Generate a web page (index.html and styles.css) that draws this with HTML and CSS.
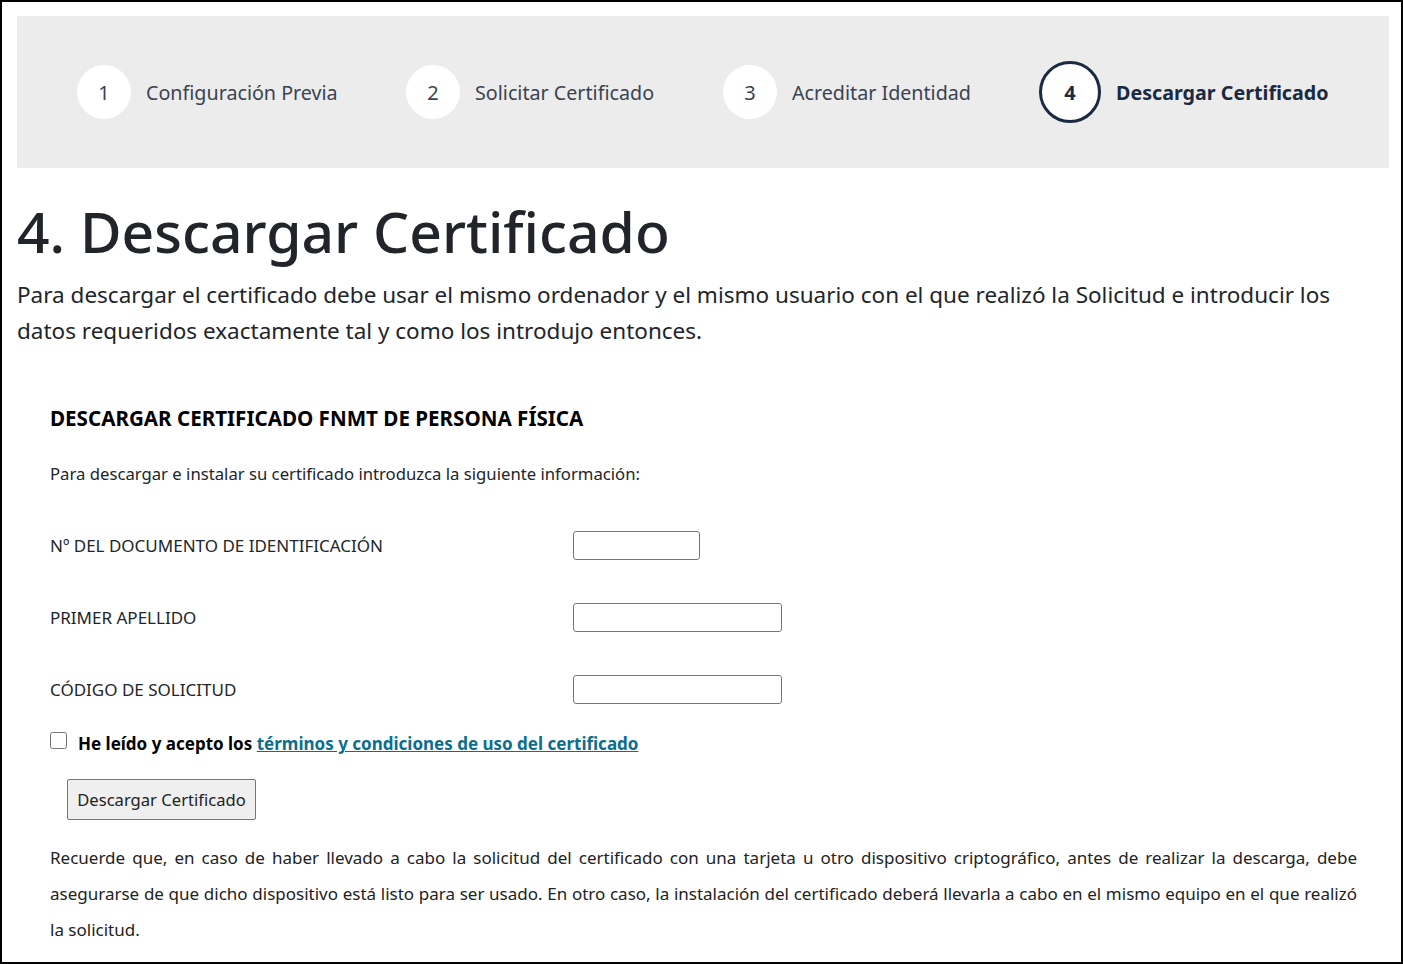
FILE: index.html
```html
<!DOCTYPE html>
<html lang="es">
<head>
    <meta charset="UTF-8">
    <meta name="viewport" content="width=device-width, initial-scale=1.0">
    <title>Descargar Certificado</title>
    <link rel="stylesheet" href="styles.css">
</head>
<body>
    <div class="page">
        <!-- pasos del proceso -->
        <div class="steps">
            <div class="step">
                <span class="step_num">1</span>
                <span class="step_txt">Configuración Previa</span>
            </div>
            <div class="step">
                <span class="step_num">2</span>
                <span class="step_txt">Solicitar Certificado</span>
            </div>
            <div class="step">
                <span class="step_num">3</span>
                <span class="step_txt">Acreditar Identidad</span>
            </div>
            <div class="step active">
                <span class="step_num">4</span>
                <span class="step_txt">Descargar Certificado</span>
            </div>
        </div>

        <h1 class="title">4. Descargar Certificado</h1>
        <p class="lead">Para descargar el certificado debe usar el mismo ordenador y el mismo usuario con el que realizó la Solicitud e introducir los datos requeridos exactamente tal y como los introdujo entonces.</p>

        <div class="box">
            <h2 class="box_title">DESCARGAR CERTIFICADO FNMT DE PERSONA FÍSICA</h2>
            <p class="intro">Para descargar e instalar su certificado introduzca la siguiente información:</p>

            <form class="form" onsubmit="return false;">
                <div class="row">
                    <label for="nif">Nº DEL DOCUMENTO DE IDENTIFICACIÓN</label>
                    <input type="text" id="nif" class="inp_short">
                </div>
                <div class="row">
                    <label for="apellido">PRIMER APELLIDO</label>
                    <input type="text" id="apellido">
                </div>
                <div class="row">
                    <label for="codigo">CÓDIGO DE SOLICITUD</label>
                    <input type="text" id="codigo">
                </div>
                <div class="check">
                    <input type="checkbox" id="acepto">
                    <label for="acepto">He leído y acepto los <a href="#">términos y condiciones de uso del certificado</a></label>
                </div>
                <button type="submit" class="btn">Descargar Certificado</button>
            </form>

            <p class="note">Recuerde que, en caso de haber llevado a cabo la solicitud del certificado con una tarjeta u otro dispositivo criptográfico, antes de realizar la descarga, debe asegurarse de que dicho dispositivo está listo para ser usado. En otro caso, la instalación del certificado deberá llevarla a cabo en el mismo equipo en el que realizó la solicitud.</p>
        </div>
    </div>
</body>
</html>
```

FILE: styles.css
```css
* {
    box-sizing: border-box;
}
html, body, div, span, h1, h2, p, form, label, input, button {
    margin: 0;
    padding: 0;
}
body {
    font-family: "Noto Sans", "Open Sans", sans-serif;
    color: #212529;
    background-color: #fff;
}
.page {
    width: 1403px;
    height: 964px;
    border: 2px solid #000;
    padding: 14px 12px 0 15px;
    overflow: hidden;
}

/* barra de pasos */
.steps {
    height: 152px;
    background-color: #ececec;
    display: flex;
    align-items: center;
    padding-left: 60px;
}
.step {
    display: flex;
    align-items: center;
    gap: 15px;
}
.step:nth-child(1) { width: 329px; }
.step:nth-child(2) { width: 317px; }
.step:nth-child(3) { width: 317px; }
.step_num {
    width: 54px;
    height: 54px;
    border-radius: 50%;
    background-color: #fff;
    display: flex;
    align-items: center;
    justify-content: center;
    font-size: 20px;
    color: #3a4350;
}
.step_txt {
    font-size: 19.7px;
    color: #3a4350;
}
.step.active .step_num {
    width: 62px;
    height: 62px;
    border: 3px solid #1a2a40;
    color: #1a2a40;
    font-weight: bold;
    margin-left: -1px;
}
.step.active .step_txt {
    color: #1a2a40;
    font-weight: bold;
}

/* cabecera */
.title {
    font-size: 57px;
    font-weight: 500;
    line-height: 70px;
    margin-top: 28px;
    color: #212529;
}
.lead {
    font-size: 22.5px;
    line-height: 36px;
    margin-top: 11px;
    padding-right: 20px;
}

/* formulario */
.box {
    padding: 55px 32px 0 33px;
}
.box_title {
    font-size: 20.6px;
    font-weight: bold;
    color: #000;
}
.intro {
    font-size: 16.7px;
    margin-top: 30px;
}
.form {
    margin-top: 39px;
}
.row {
    display: flex;
    align-items: center;
    height: 72px;
    margin-top: -15px;
}
.row + .row {
    margin-top: 0;
}
.row label {
    width: 523px;
    font-size: 17px;
}
.row input {
    width: 209px;
    height: 29px;
    border: 1px solid #767676;
    border-radius: 3px;
    font-size: 16px;
    padding: 0 6px;
}
.row input.inp_short {
    width: 127px;
}
.check {
    display: flex;
    align-items: flex-start;
    gap: 11px;
    margin-top: 7px;
}
.check input {
    width: 17px;
    height: 17px;
    margin: 0;
}
.check label {
    font-size: 17px;
    line-height: 24px;
    font-weight: bold;
    color: #000;
}
.check a {
    color: #0b6e8f;
}
.btn {
    margin: 23px 0 0 17px;
    width: 189px;
    height: 41px;
    font-family: inherit;
    font-size: 16.6px;
    background-color: #efefef;
    border: 1px solid #767676;
    border-radius: 2px;
    color: #222;
}
.note {
    font-size: 17px;
    line-height: 36px;
    text-align: justify;
    margin-top: 20px;
    color: #222;
}
```
